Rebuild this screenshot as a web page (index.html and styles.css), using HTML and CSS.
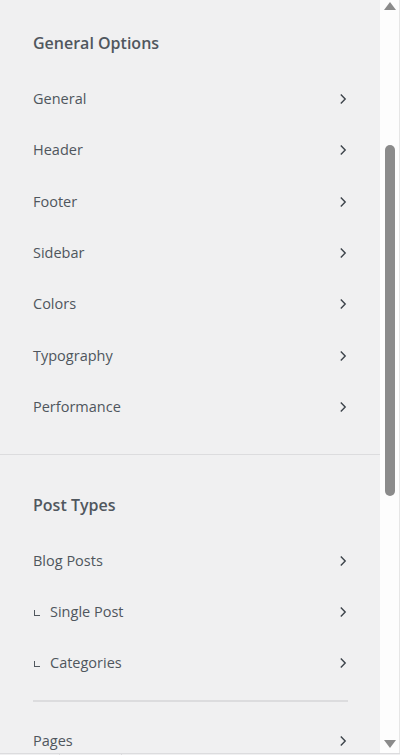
FILE: index.html
```html
<!DOCTYPE html>
<html>
<head>
<meta charset="utf-8">
<link rel="stylesheet" href="styles.css">
</head>
<body>
<div class="frame">
  <div class="main">
    <div class="panel">
      <section class="group first">
        <h3 class="group-title">General Options</h3>
        <ul class="items">
          <li class="item"><span class="label">General</span><svg class="chev" viewBox="0 0 8 12"><path d="M1.8 1.5 L6.2 6 L1.8 10.5"/></svg></li>
          <li class="item"><span class="label">Header</span><svg class="chev" viewBox="0 0 8 12"><path d="M1.8 1.5 L6.2 6 L1.8 10.5"/></svg></li>
          <li class="item"><span class="label">Footer</span><svg class="chev" viewBox="0 0 8 12"><path d="M1.8 1.5 L6.2 6 L1.8 10.5"/></svg></li>
          <li class="item"><span class="label">Sidebar</span><svg class="chev" viewBox="0 0 8 12"><path d="M1.8 1.5 L6.2 6 L1.8 10.5"/></svg></li>
          <li class="item"><span class="label">Colors</span><svg class="chev" viewBox="0 0 8 12"><path d="M1.8 1.5 L6.2 6 L1.8 10.5"/></svg></li>
          <li class="item"><span class="label">Typography</span><svg class="chev" viewBox="0 0 8 12"><path d="M1.8 1.5 L6.2 6 L1.8 10.5"/></svg></li>
          <li class="item"><span class="label">Performance</span><svg class="chev" viewBox="0 0 8 12"><path d="M1.8 1.5 L6.2 6 L1.8 10.5"/></svg></li>
        </ul>
      </section>
      <section class="group second">
        <h3 class="group-title">Post Types</h3>
        <ul class="items">
          <li class="item"><span class="label">Blog Posts</span><svg class="chev" viewBox="0 0 8 12"><path d="M1.8 1.5 L6.2 6 L1.8 10.5"/></svg></li>
          <li class="item sub"><span class="label"><span class="elbow"></span>Single Post</span><svg class="chev" viewBox="0 0 8 12"><path d="M1.8 1.5 L6.2 6 L1.8 10.5"/></svg></li>
          <li class="item sub"><span class="label"><span class="elbow"></span>Categories</span><svg class="chev" viewBox="0 0 8 12"><path d="M1.8 1.5 L6.2 6 L1.8 10.5"/></svg></li>
          <li class="divider"></li>
          <li class="item"><span class="label">Pages</span><svg class="chev" viewBox="0 0 8 12"><path d="M1.8 1.5 L6.2 6 L1.8 10.5"/></svg></li>
        </ul>
      </section>
    </div>
    <div class="scrollbar">
      <span class="arrow up"></span>
      <div class="track"><div class="thumb"></div></div>
      <span class="arrow down"></span>
    </div>
  </div>
  <div class="footer">
    <span class="fbtn first-btn"></span>
    <span class="fbtn second-btn"></span>
    <span class="fbtn rest"></span>
  </div>
</div>
</body>
</html>
```

FILE: styles.css
```css
* { box-sizing: border-box; }
html, body { margin: 0; padding: 0; }
body {
  width: 400px;
  height: 755px;
  overflow: hidden;
  background: #f0f0f1;
  font-family: "Open Sans", "Noto Sans", sans-serif;
  color: #50575e;
}
.frame {
  display: flex;
  flex-direction: column;
  height: 755px;
}
.main {
  display: flex;
  height: 753px;
  flex: none;
}
.panel {
  width: 380px;
  flex: none;
  overflow: hidden;
  background: #f0f0f1;
}
.group { padding: 0 32px 0 33px; }
.group.first { padding-top: 31px; padding-bottom: 21px; border-bottom: 1px solid #dcdcde; }
.group.second { padding-top: 38px; }
.group-title {
  margin: 0 0 18.33px;
  font-size: 16px;
  font-weight: 600;
  line-height: 24px;
  color: #50575e;
}
.items { list-style: none; margin: 0; padding: 0; }
.item {
  height: 51.33px;
  display: flex;
  align-items: center;
  justify-content: space-between;
  font-size: 14.5px;
  line-height: 20px;
  color: #4f565d;
}
.label { display: flex; align-items: center; }
.elbow {
  width: 6px;
  height: 6px;
  border-left: 1px solid #50575e;
  border-bottom: 1px solid #50575e;
  margin: 2px 10px 0 1px;
}
.chev {
  width: 8px;
  height: 12px;
  margin-right: 1px;
  fill: none;
  stroke: #3c434a;
  stroke-width: 1.4;
}
.divider {
  height: 2px;
  background: #dcdcde;
  margin: 11px 0 13px;
}
.scrollbar {
  width: 20px;
  flex: none;
  background: #fdfdfd;
  border-right: 1px solid #e6e6e6;
  display: flex;
  flex-direction: column;
  align-items: center;
  padding-left: 1px;
}
.arrow {
  width: 0; height: 0;
  border-left: 6.5px solid transparent;
  border-right: 6.5px solid transparent;
}
.arrow.up { border-bottom: 8px solid #8b8b8b; margin-top: 2px; }
.arrow.down { border-top: 8px solid #8b8b8b; margin-bottom: 5px; }
.track { flex: 1; width: 100%; display: flex; justify-content: center; }
.thumb {
  width: 10px;
  height: 351px;
  margin-top: 135px;
  background: #8b8b8b;
  border-radius: 5px;
}
.footer {
  height: 2px;
  flex: none;
  display: flex;
  border-top: 1px solid #dcdcde;
  background: #f0f0f1;
}
.fbtn { height: 100%; }
.first-btn { width: 60px; border-right: 1px solid #dcdcde; }
.second-btn { width: 62px; border-right: 1px solid #dcdcde; }
.rest { flex: 1; }
```
